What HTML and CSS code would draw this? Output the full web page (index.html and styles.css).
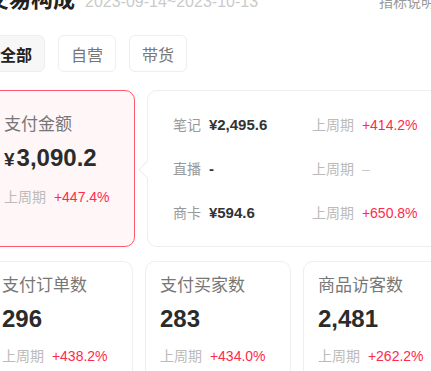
FILE: index.html
```html
<!DOCTYPE html>
<html lang="zh-CN">
  <head>
    <meta charset="UTF-8" />
    <meta name="viewport" content="width=device-width, initial-scale=1.0" />
    <title>交易构成</title>
    <link rel="stylesheet" href="styles.css">
  </head>
  <body>
    <div class="page">
      <!-- Header -->
      <div class="header">
        <h2 class="title">交易构成</h2>
        <span class="date">2023-09-14~2023-10-13</span>
        <span class="help">指标说明</span>
      </div>

      <!-- Channel tabs -->
      <div class="tabs">
        <button class="tab active">全部</button>
        <button class="tab">自营</button>
        <button class="tab">带货</button>
      </div>

      <!-- Selected metric + breakdown -->
      <div class="overview">
        <div class="card card-selected">
          <div class="card-label">支付金额</div>
          <div class="card-value"><span class="yen">¥</span>3,090.2</div>
          <div class="compare">上周期 <span class="up">+447.4%</span></div>
        </div>

        <div class="breakdown">
          <div class="row">
            <div class="part">笔记 <b>¥2,495.6</b></div>
            <div class="compare">上周期 <span class="up">+414.2%</span></div>
          </div>
          <div class="row">
            <div class="part">直播 <b>-</b></div>
            <div class="compare">上周期 <span class="none">–</span></div>
          </div>
          <div class="row">
            <div class="part">商卡 <b>¥594.6</b></div>
            <div class="compare">上周期 <span class="up">+650.8%</span></div>
          </div>
        </div>
      </div>

      <!-- Other metrics -->
      <div class="metrics">
        <div class="card">
          <div class="card-label">支付订单数</div>
          <div class="card-value">296</div>
          <div class="compare">上周期 <span class="up">+438.2%</span></div>
        </div>
        <div class="card">
          <div class="card-label">支付买家数</div>
          <div class="card-value">283</div>
          <div class="compare">上周期 <span class="up">+434.0%</span></div>
        </div>
        <div class="card">
          <div class="card-label">商品访客数</div>
          <div class="card-value">2,481</div>
          <div class="compare">上周期 <span class="up">+262.2%</span></div>
        </div>
      </div>
    </div>
  </body>
</html>
```

FILE: styles.css
```css
* {
  margin: 0;
  padding: 0;
  box-sizing: border-box;
}

body,
html {
  height: 100%;
  overflow: hidden;
  background: #fff;
}

body {
  font-family: "Liberation Sans", "Noto Sans CJK SC", sans-serif;
  color: #333;
}

.page {
  width: 462px;
  margin: -15px 0 0 -13px;
}

.header {
  display: flex;
  align-items: baseline;
  height: 30px;
  line-height: 30px;
}

.title {
  font-size: 22px;
  font-weight: 700;
  color: #222;
}

.date {
  margin-left: 10px;
  font-size: 16px;
  color: #cacaca;
}

.help {
  margin-left: auto;
  margin-right: 6px;
  font-size: 14px;
  color: #999;
  width: 64px;
  overflow: hidden;
  white-space: nowrap;
}

.tabs {
  display: flex;
  gap: 13px;
  margin-top: 20px;
}

.tab {
  width: 58px;
  height: 37px;
  border: 1px solid #eee;
  border-radius: 6px;
  background: #fff;
  font-family: inherit;
  font-size: 16px;
  color: #777;
}

.tab.active {
  background: #f7f7f7;
  color: #222;
  font-weight: 700;
}

.overview {
  display: flex;
  gap: 12px;
  margin-top: 18px;
  height: 157px;
}

.card {
  width: 146px;
  border: 1px solid #eee;
  border-radius: 10px;
  background: #fff;
  padding: 13px 14px;
}

.card-selected {
  width: 148px;
  border: 1.5px solid #ff5a6f;
  background: #fff6f7;
  padding: 23px 16px;
}

.card-label {
  font-size: 17px;
  line-height: 22px;
  color: #777;
}

.card-value {
  margin-top: 8px;
  font-size: 24px;
  line-height: 28px;
  font-weight: 700;
  color: #2b2b2b;
}

.yen {
  font-size: 19px;
  margin-right: 2px;
}

.compare {
  font-size: 14px;
  color: #bbb;
  white-space: nowrap;
}

.card .compare {
  margin-top: 12px;
}

.up {
  margin-left: 4px;
  color: #ff2a4a;
}

.none {
  margin-left: 4px;
  color: #ccc;
}

.breakdown {
  position: relative;
  flex: 1;
  display: flex;
  flex-direction: column;
  justify-content: center;
  gap: 26px;
  border: 1px solid #eee;
  border-radius: 10px;
  background: #fff;
  padding: 0 25px;
}

/* little arrow pointing at the selected card */
.breakdown::before {
  content: "";
  position: absolute;
  left: -7px;
  top: 72px;
  width: 12px;
  height: 12px;
  background: #fff;
  border-left: 1px solid #eee;
  border-bottom: 1px solid #eee;
  transform: rotate(45deg);
}

.row {
  display: grid;
  grid-template-columns: 139px 1fr;
  font-size: 14px;
  line-height: 18px;
}

.part {
  color: #999;
}

.part b {
  margin-left: 4px;
  font-size: 15px;
  color: #333;
}

.metrics {
  display: flex;
  gap: 12px;
  margin-top: 14px;
}

.metrics .card {
  height: 130px;
}
```
